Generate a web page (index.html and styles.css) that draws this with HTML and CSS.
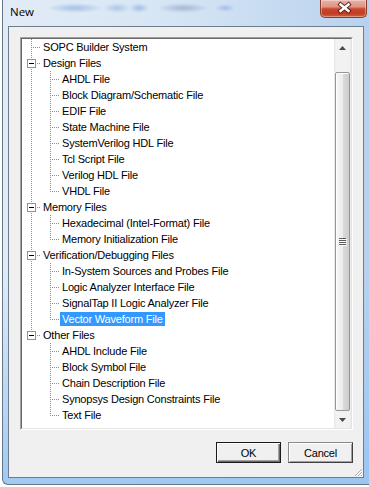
FILE: index.html
```html
<!DOCTYPE html>
<html>
<head>
<meta charset="utf-8">
<link rel="stylesheet" href="styles.css">
</head>
<body>
<div class="window">
  <div class="titlebar">
    <span class="title">New</span>
    <div class="close">
      <svg width="45" height="17" viewBox="0 0 45 17">
        <path d="M19.5 4.5 L27.5 11 M27.5 4.5 L19.5 11" stroke="#4a1810" stroke-width="4.4" stroke-linecap="square" fill="none" opacity="0.85"/>
        <path d="M19.5 4.5 L27.5 11 M27.5 4.5 L19.5 11" stroke="#ffffff" stroke-width="2.4" stroke-linecap="square" fill="none"/>
      </svg>
    </div>
  </div>
  <div class="client">
    <div class="tree">
      <div class="tree-in">
        <div class="list">
          <div class="row"><span class="cell tee"></span><span class="label">SOPC Builder System</span></div>
          <div class="row"><span class="cell tee"><span class="box"></span></span><span class="label">Design Files</span></div>
          <div class="row"><span class="cell pipe"></span><span class="cell tee"></span><span class="label">AHDL File</span></div>
          <div class="row"><span class="cell pipe"></span><span class="cell tee"></span><span class="label">Block Diagram/Schematic File</span></div>
          <div class="row"><span class="cell pipe"></span><span class="cell tee"></span><span class="label">EDIF File</span></div>
          <div class="row"><span class="cell pipe"></span><span class="cell tee"></span><span class="label">State Machine File</span></div>
          <div class="row"><span class="cell pipe"></span><span class="cell tee"></span><span class="label">SystemVerilog HDL File</span></div>
          <div class="row"><span class="cell pipe"></span><span class="cell tee"></span><span class="label">Tcl Script File</span></div>
          <div class="row"><span class="cell pipe"></span><span class="cell tee"></span><span class="label">Verilog HDL File</span></div>
          <div class="row"><span class="cell pipe"></span><span class="cell ell"></span><span class="label">VHDL File</span></div>
          <div class="row"><span class="cell tee"><span class="box"></span></span><span class="label">Memory Files</span></div>
          <div class="row"><span class="cell pipe"></span><span class="cell tee"></span><span class="label">Hexadecimal (Intel-Format) File</span></div>
          <div class="row"><span class="cell pipe"></span><span class="cell ell"></span><span class="label">Memory Initialization File</span></div>
          <div class="row"><span class="cell tee"><span class="box"></span></span><span class="label">Verification/Debugging Files</span></div>
          <div class="row"><span class="cell pipe"></span><span class="cell tee"></span><span class="label">In-System Sources and Probes File</span></div>
          <div class="row"><span class="cell pipe"></span><span class="cell tee"></span><span class="label">Logic Analyzer Interface File</span></div>
          <div class="row"><span class="cell pipe"></span><span class="cell tee"></span><span class="label">SignalTap II Logic Analyzer File</span></div>
          <div class="row"><span class="cell pipe"></span><span class="cell ell"></span><span class="label selected">Vector Waveform File</span></div>
          <div class="row"><span class="cell ell"><span class="box"></span></span><span class="label">Other Files</span></div>
          <div class="row"><span class="cell blank"></span><span class="cell tee"></span><span class="label">AHDL Include File</span></div>
          <div class="row"><span class="cell blank"></span><span class="cell tee"></span><span class="label">Block Symbol File</span></div>
          <div class="row"><span class="cell blank"></span><span class="cell tee"></span><span class="label">Chain Description File</span></div>
          <div class="row"><span class="cell blank"></span><span class="cell tee"></span><span class="label">Synopsys Design Constraints File</span></div>
          <div class="row"><span class="cell blank"></span><span class="cell ell"></span><span class="label">Text File</span></div>
        </div>
        <div class="scrollbar">
          <div class="sb-btn">
            <svg width="7" height="4" viewBox="0 0 7 4"><polygon points="0,4 3.5,0 7,4" fill="#4a4a4a"/></svg>
          </div>
          <div class="sb-track">
            <div class="thumb">
              <svg width="8" height="8" viewBox="0 0 8 8">
                <rect x="0" y="0" width="7" height="1" fill="#5c5c5c"/>
                <rect x="0" y="2" width="7" height="1" fill="#5c5c5c"/>
                <rect x="0" y="4" width="7" height="1" fill="#5c5c5c"/>
                <rect x="0" y="6" width="7" height="1" fill="#5c5c5c"/>
                <rect x="1" y="1" width="7" height="1" fill="#ffffff" opacity="0.8"/>
                <rect x="1" y="3" width="7" height="1" fill="#ffffff" opacity="0.8"/>
                <rect x="1" y="5" width="7" height="1" fill="#ffffff" opacity="0.8"/>
                <rect x="1" y="7" width="7" height="1" fill="#ffffff" opacity="0.8"/>
              </svg>
            </div>
          </div>
          <div class="sb-btn">
            <svg width="7" height="4" viewBox="0 0 7 4"><polygon points="0,0 7,0 3.5,4" fill="#4a4a4a"/></svg>
          </div>
        </div>
      </div>
    </div>
    <div class="buttons">
      <button class="btn default">OK</button>
      <button class="btn">Cancel</button>
    </div>
    <div class="grip-row">
      <svg width="10" height="10" viewBox="0 0 10 10">
        <g fill="#a9a9a9">
          <rect x="8" y="2" width="1" height="1"/><rect x="7" y="3" width="1" height="1"/><rect x="6" y="4" width="1" height="1"/><rect x="5" y="5" width="1" height="1"/><rect x="4" y="6" width="1" height="1"/><rect x="3" y="7" width="1" height="1"/><rect x="2" y="8" width="1" height="1"/>
          <rect x="8" y="5" width="1" height="1"/><rect x="7" y="6" width="1" height="1"/><rect x="6" y="7" width="1" height="1"/><rect x="5" y="8" width="1" height="1"/>
          <rect x="8" y="8" width="1" height="1"/>
        </g>
        <g fill="#ffffff">
          <rect x="9" y="2" width="1" height="1"/><rect x="8" y="3" width="1" height="1"/><rect x="7" y="4" width="1" height="1"/><rect x="6" y="5" width="1" height="1"/><rect x="5" y="6" width="1" height="1"/><rect x="4" y="7" width="1" height="1"/><rect x="3" y="8" width="1" height="1"/>
          <rect x="9" y="5" width="1" height="1"/><rect x="8" y="6" width="1" height="1"/><rect x="7" y="7" width="1" height="1"/><rect x="6" y="8" width="1" height="1"/>
          <rect x="9" y="8" width="1" height="1"/>
        </g>
      </svg>
    </div>
  </div>
</div>
</body>
</html>
```
FILE: styles.css
```css
html, body {
  margin: 0;
  padding: 0;
}
body {
  width: 369px;
  height: 487px;
  overflow: hidden;
  background: #ffffff;
  font-family: "Liberation Sans", Arial, sans-serif;
}
.window {
  margin-left: 2px;
  width: 370px;
  height: 484px;
  border-left: 1px solid #66778a;
  border-bottom: 1px solid #66778a;
  border-bottom-left-radius: 6px;
  display: flex;
  flex-direction: column;
  background:
    radial-gradient(ellipse 28px 5px at 72px 8px, rgba(120,160,215,0.55), rgba(120,160,215,0)),
    radial-gradient(ellipse 14px 5px at 114px 8px, rgba(120,160,215,0.45), rgba(120,160,215,0)),
    radial-gradient(ellipse 10px 5px at 136px 8px, rgba(110,150,215,0.5), rgba(110,150,215,0)),
    radial-gradient(ellipse 26px 5px at 180px 8px, rgba(120,140,180,0.5), rgba(120,140,180,0)),
    radial-gradient(ellipse 10px 4px at 222px 8px, rgba(110,150,215,0.45), rgba(110,150,215,0)),
    linear-gradient(to bottom, rgba(160,200,240,0) 0, rgba(160,200,240,0) 55%, rgba(150,195,242,0.85) 100%),
    linear-gradient(to right, #e2ecf7 0, #d6e5f4 45%, #c3d9f0 80%, #b7d1ee 100%);
}
.titlebar {
  height: 26px;
  flex: none;
  display: flex;
  align-items: flex-start;
}
.title {
  margin: 5px 0 0 7px;
  font-family: "Open Sans", "Noto Sans", sans-serif;
  font-size: 11.5px;
  line-height: 14px;
  color: #000;
}
.close {
  margin-left: auto;
  margin-right: 6px;
  width: 47px;
  height: 18px;
  box-sizing: border-box;
  border: 1px solid #8a3b2f;
  border-top: none;
  border-radius: 0 0 5px 5px;
  background: linear-gradient(to bottom, #eab2a6 0%, #df9482 40%, #c9492e 52%, #c43b20 78%, #d2603f 100%);
  box-shadow: inset 0 0 0 1px rgba(255,255,255,0.35);
  display: flex;
}
.client {
  margin-left: 5px;
  width: 356px;
  height: 452px;
  flex: none;
  box-sizing: border-box;
  border: 1px solid #6e7d8e;
  background: #f0f0f0;
  padding: 10px 10px 0 11px;
  display: flex;
  flex-direction: column;
}
.tree {
  height: 393px;
  flex: none;
  box-sizing: border-box;
  border: 1px solid;
  border-color: #a0a0a0 #ffffff #ffffff #a0a0a0;
}
.tree-in {
  height: 100%;
  box-sizing: border-box;
  border: 1px solid;
  border-color: #696969 #e3e3e3 #e3e3e3 #696969;
  background: #ffffff;
  display: flex;
}
.list {
  flex: 1;
  overflow: hidden;
}
.row {
  display: flex;
  height: 16px;
}
.cell {
  display: block;
  flex: none;
  width: 19px;
  height: 16px;
}
.pipe {
  background: repeating-linear-gradient(to bottom, #8e8e8e 0 1px, transparent 1px 2px) 9px 0 / 1px 16px no-repeat;
}
.tee {
  background:
    repeating-linear-gradient(to right, #8e8e8e 0 1px, transparent 1px 2px) 11px 8px / 8px 1px no-repeat,
    repeating-linear-gradient(to bottom, #8e8e8e 0 1px, transparent 1px 2px) 9px 0 / 1px 16px no-repeat;
}
.ell {
  background:
    repeating-linear-gradient(to right, #8e8e8e 0 1px, transparent 1px 2px) 11px 8px / 8px 1px no-repeat,
    repeating-linear-gradient(to bottom, #8e8e8e 0 1px, transparent 1px 2px) 9px 0 / 1px 9px no-repeat;
}
.box {
  display: block;
  width: 9px;
  height: 9px;
  box-sizing: border-box;
  margin: 4px 0 0 5px;
  border: 1px solid #919191;
  background: linear-gradient(#000, #000) center / 5px 1px no-repeat, #ffffff;
}
.label {
  margin: 1px 0;
  padding: 0 2px;
  font-size: 11px;
  line-height: 14px;
  letter-spacing: -0.2px;
  white-space: nowrap;
  color: #000;
}
.label.selected {
  background: #3399ff;
  color: #ffffff;
}
.scrollbar {
  width: 17px;
  flex: none;
  display: flex;
  flex-direction: column;
  background: linear-gradient(to right, #e6e6e6 0, #f2f2f2 2px, #f2f2f2 15px, #e9e9e9 17px);
}
.sb-btn {
  height: 17px;
  flex: none;
  display: flex;
  align-items: center;
  justify-content: center;
}
.sb-track {
  flex: 1;
  display: flex;
  flex-direction: column;
}
.thumb {
  margin: 16px 1px 0;
  height: 339px;
  box-sizing: border-box;
  border: 1px solid #979797;
  border-radius: 2px;
  background: linear-gradient(to right, #f6f6f6 0, #ededed 50%, #dcdcdc 50%, #cdcdcd 100%);
  box-shadow: inset 1px 1px #ffffff;
  display: flex;
  align-items: center;
  justify-content: center;
}
.buttons {
  margin-top: 12px;
  display: flex;
  justify-content: flex-end;
  gap: 7px;
}
.btn {
  width: 65px;
  height: 21px;
  margin: 0;
  padding: 0;
  box-sizing: border-box;
  font-family: "Liberation Sans", Arial, sans-serif;
  font-size: 11px;
  letter-spacing: -0.2px;
  color: #000;
  background: #f0f0f0;
  border: 1px solid;
  border-color: #8a8a8a #404040 #404040 #8a8a8a;
  box-shadow: inset 1px 1px #ffffff, inset -1px -1px #a0a0a0;
}
.btn.default {
  border-color: #1a1a1a;
  box-shadow: inset 1px 1px #ffffff, inset -1px -1px #696969, inset -2px -2px #a0a0a0;
}
.grip-row {
  flex: 1;
  margin-right: -10px;
  display: flex;
  align-items: flex-end;
  justify-content: flex-end;
}
.grip-row svg {
  display: block;
}
```
